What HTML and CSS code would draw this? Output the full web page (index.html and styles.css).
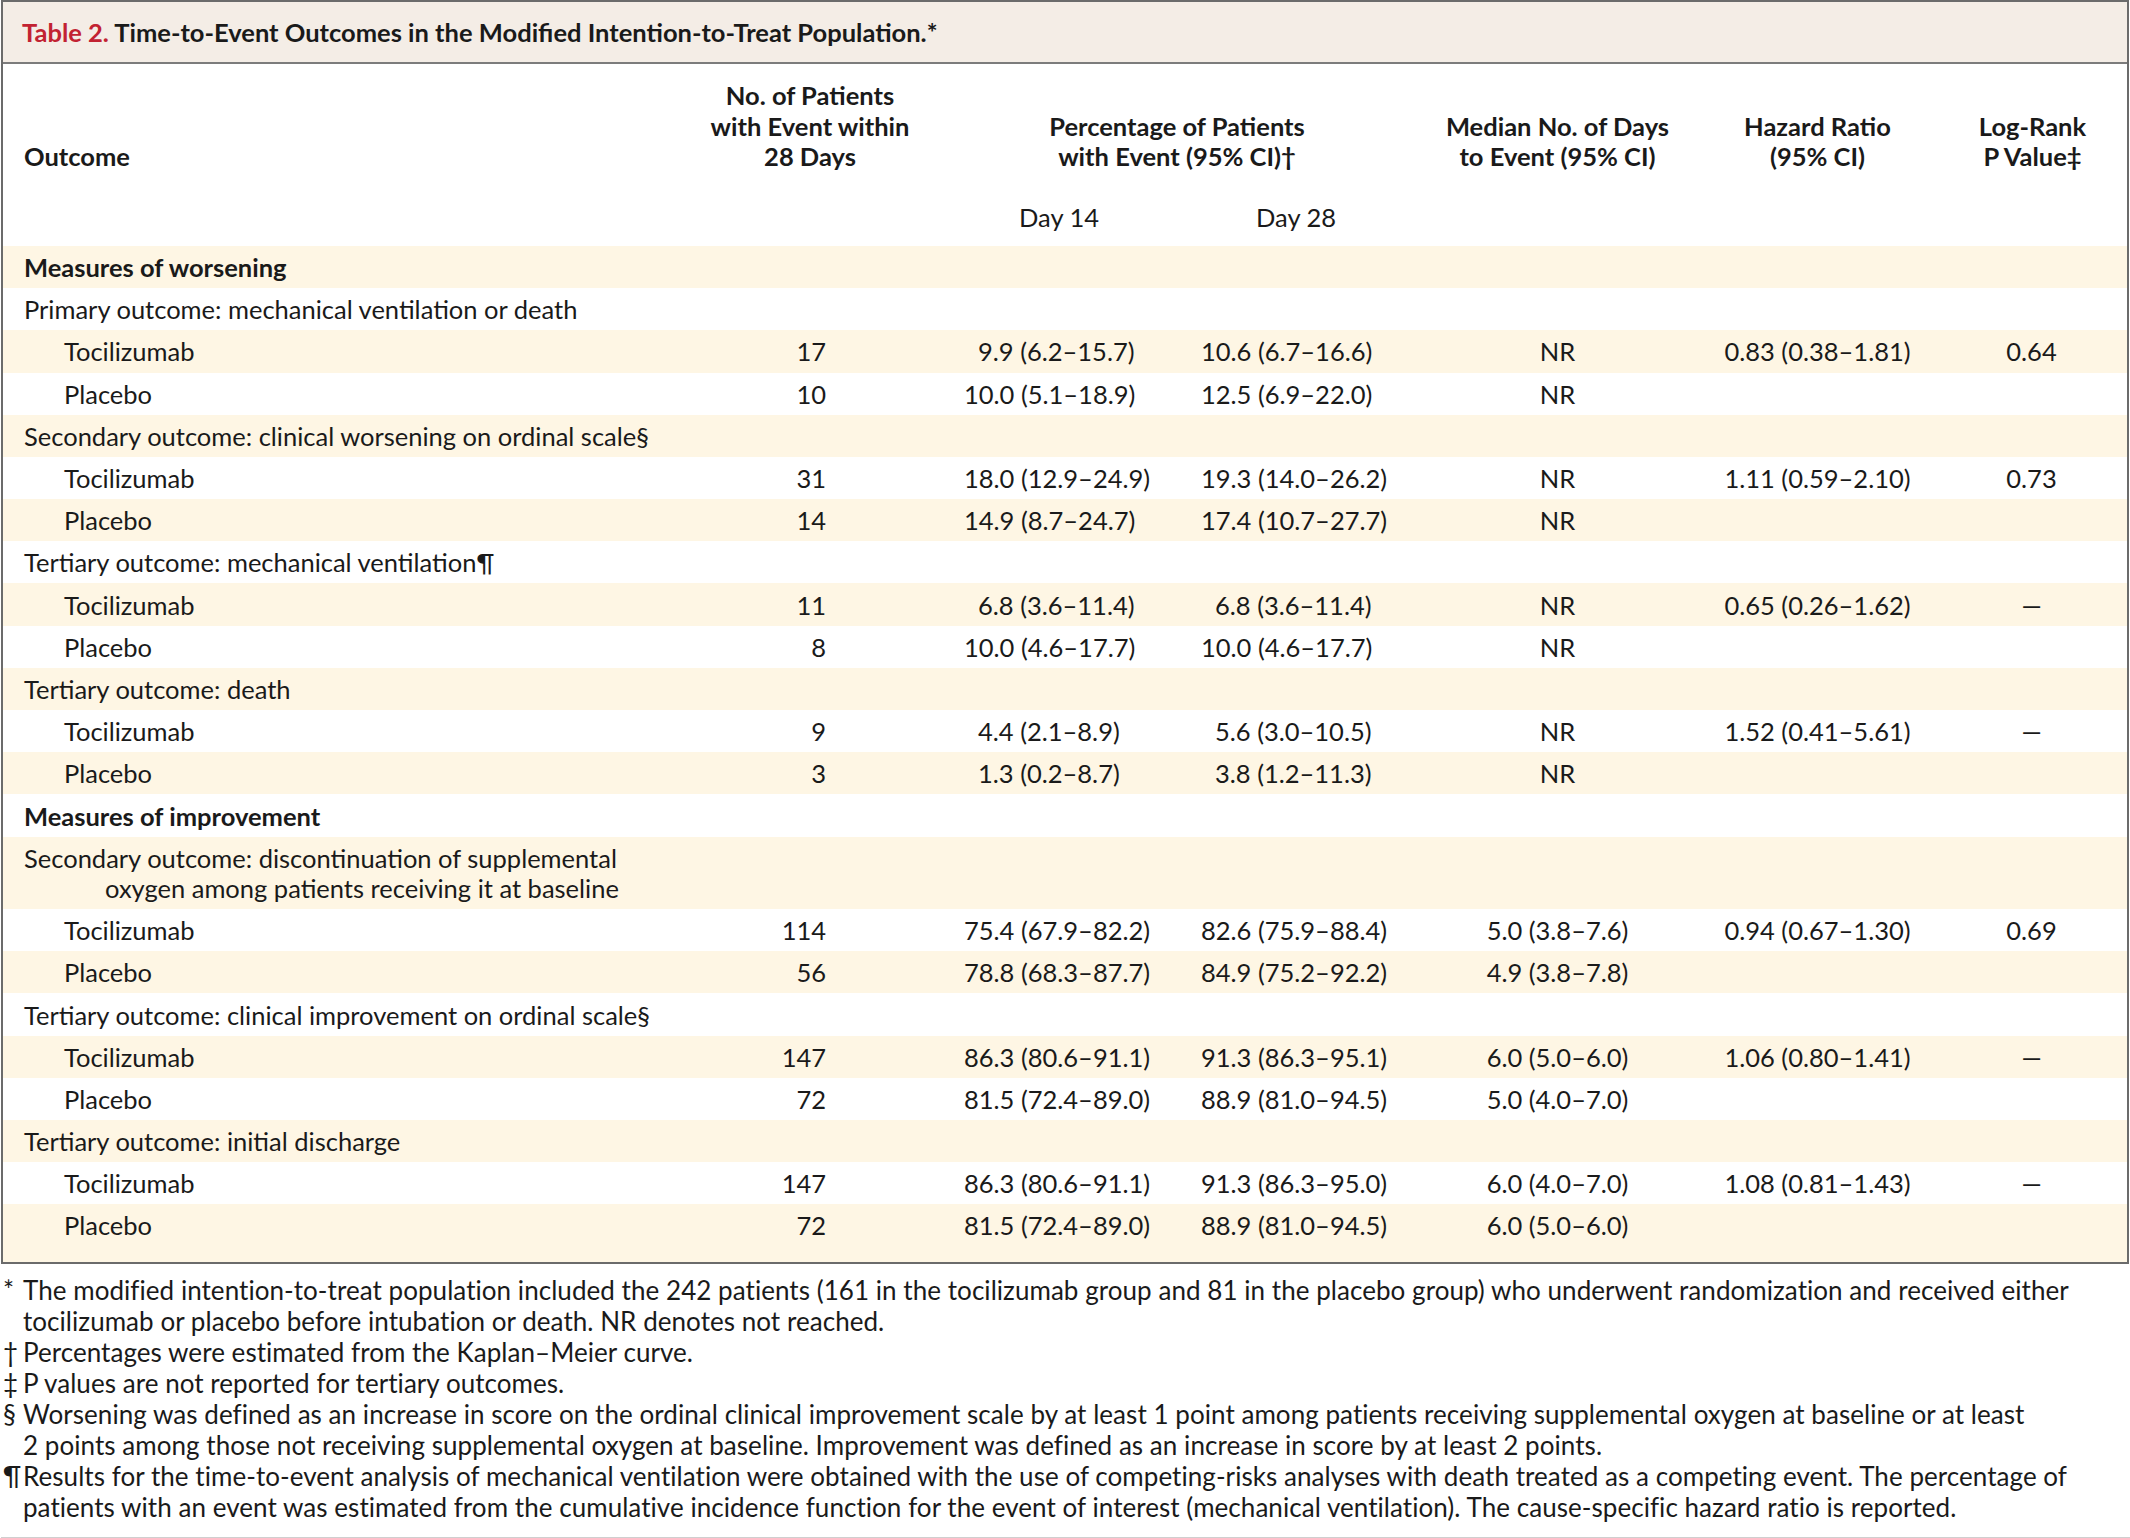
FILE: index.html
```html
<!DOCTYPE html>
<html lang="en">
<head>
<meta charset="utf-8">
<title>Table 2. Time-to-Event Outcomes</title>
<link rel="stylesheet" href="styles.css">
</head>
<body>
<div class="page">
  <div class="tbox">
    <div class="title"><span class="tnum">Table 2.</span> Time-to-Event Outcomes in the Modified Intention-to-Treat Population.*</div>
    <table class="data">
      <colgroup>
        <col class="c-out">
        <col class="c-no">
        <col class="c-d14">
        <col class="c-d28">
        <col class="c-med">
        <col class="c-hr">
        <col class="c-lr">
      </colgroup>
      <thead>
        <tr class="hrow1">
          <th class="h-out">Outcome</th>
          <th class="h-ctr">No. of Patients<br>with Event within<br>28 Days</th>
          <th class="h-ctr h-pct" colspan="2">Percentage of Patients<br>with Event (95% CI)†</th>
          <th class="h-ctr">Median No. of Days<br>to Event (95% CI)</th>
          <th class="h-ctr">Hazard Ratio<br>(95% CI)</th>
          <th class="h-ctr h-lr">Log-Rank<br>P Value‡</th>
        </tr>
        <tr class="hrow2">
          <th></th>
          <th></th>
          <th class="h-day h-d14">Day 14</th>
          <th class="h-day h-d28">Day 28</th>
          <th></th>
          <th></th>
          <th></th>
        </tr>
      </thead>
      <tbody>
        <tr><td class="sec" colspan="7">Measures of worsening</td></tr>
        <tr><td class="lab" colspan="7">Primary outcome: mechanical ventilation or death</td></tr>
        <tr><td class="grp">Tocilizumab</td><td class="n">17</td><td class="d14 p1">9.9 (6.2–15.7)</td><td class="d28">10.6 (6.7–16.6)</td><td class="ctr">NR</td><td class="ctr">0.83 (0.38–1.81)</td><td class="lr">0.64</td></tr>
        <tr><td class="grp">Placebo</td><td class="n">10</td><td class="d14">10.0 (5.1–18.9)</td><td class="d28">12.5 (6.9–22.0)</td><td class="ctr">NR</td><td class="ctr"></td><td class="lr"></td></tr>
        <tr><td class="lab" colspan="7">Secondary outcome: clinical worsening on ordinal scale§</td></tr>
        <tr><td class="grp">Tocilizumab</td><td class="n">31</td><td class="d14">18.0 (12.9–24.9)</td><td class="d28">19.3 (14.0–26.2)</td><td class="ctr">NR</td><td class="ctr">1.11 (0.59–2.10)</td><td class="lr">0.73</td></tr>
        <tr><td class="grp">Placebo</td><td class="n">14</td><td class="d14">14.9 (8.7–24.7)</td><td class="d28">17.4 (10.7–27.7)</td><td class="ctr">NR</td><td class="ctr"></td><td class="lr"></td></tr>
        <tr><td class="lab" colspan="7">Tertiary outcome: mechanical ventilation¶</td></tr>
        <tr><td class="grp">Tocilizumab</td><td class="n">11</td><td class="d14 p1">6.8 (3.6–11.4)</td><td class="d28 p1">6.8 (3.6–11.4)</td><td class="ctr">NR</td><td class="ctr">0.65 (0.26–1.62)</td><td class="lr">—</td></tr>
        <tr><td class="grp">Placebo</td><td class="n">8</td><td class="d14">10.0 (4.6–17.7)</td><td class="d28">10.0 (4.6–17.7)</td><td class="ctr">NR</td><td class="ctr"></td><td class="lr"></td></tr>
        <tr><td class="lab" colspan="7">Tertiary outcome: death</td></tr>
        <tr><td class="grp">Tocilizumab</td><td class="n">9</td><td class="d14 p1">4.4 (2.1–8.9)</td><td class="d28 p1">5.6 (3.0–10.5)</td><td class="ctr">NR</td><td class="ctr">1.52 (0.41–5.61)</td><td class="lr">—</td></tr>
        <tr><td class="grp">Placebo</td><td class="n">3</td><td class="d14 p1">1.3 (0.2–8.7)</td><td class="d28 p1">3.8 (1.2–11.3)</td><td class="ctr">NR</td><td class="ctr"></td><td class="lr"></td></tr>
        <tr><td class="sec" colspan="7">Measures of improvement</td></tr>
        <tr class="tall"><td class="lab hang" colspan="7">Secondary outcome: discontinuation of supplemental<br>oxygen among patients receiving it at baseline</td></tr>
        <tr><td class="grp">Tocilizumab</td><td class="n">114</td><td class="d14">75.4 (67.9–82.2)</td><td class="d28">82.6 (75.9–88.4)</td><td class="ctr">5.0 (3.8–7.6)</td><td class="ctr">0.94 (0.67–1.30)</td><td class="lr">0.69</td></tr>
        <tr><td class="grp">Placebo</td><td class="n">56</td><td class="d14">78.8 (68.3–87.7)</td><td class="d28">84.9 (75.2–92.2)</td><td class="ctr">4.9 (3.8–7.8)</td><td class="ctr"></td><td class="lr"></td></tr>
        <tr><td class="lab" colspan="7">Tertiary outcome: clinical improvement on ordinal scale§</td></tr>
        <tr><td class="grp">Tocilizumab</td><td class="n">147</td><td class="d14">86.3 (80.6–91.1)</td><td class="d28">91.3 (86.3–95.1)</td><td class="ctr">6.0 (5.0–6.0)</td><td class="ctr">1.06 (0.80–1.41)</td><td class="lr">—</td></tr>
        <tr><td class="grp">Placebo</td><td class="n">72</td><td class="d14">81.5 (72.4–89.0)</td><td class="d28">88.9 (81.0–94.5)</td><td class="ctr">5.0 (4.0–7.0)</td><td class="ctr"></td><td class="lr"></td></tr>
        <tr><td class="lab" colspan="7">Tertiary outcome: initial discharge</td></tr>
        <tr><td class="grp">Tocilizumab</td><td class="n">147</td><td class="d14">86.3 (80.6–91.1)</td><td class="d28">91.3 (86.3–95.0)</td><td class="ctr">6.0 (4.0–7.0)</td><td class="ctr">1.08 (0.81–1.43)</td><td class="lr">—</td></tr>
        <tr class="last"><td class="grp">Placebo</td><td class="n">72</td><td class="d14">81.5 (72.4–89.0)</td><td class="d28">88.9 (81.0–94.5)</td><td class="ctr">6.0 (5.0–6.0)</td><td class="ctr"></td><td class="lr"></td></tr>
      </tbody>
    </table>
  </div>
  <div class="notes">
    <div class="note"><span class="sym">*</span><span class="txt">The modified intention-to-treat population included the 242 patients (161 in the tocilizumab group and 81 in the placebo group) who underwent randomization and received either<br>tocilizumab or placebo before intubation or death. NR denotes not reached.</span></div>
    <div class="note"><span class="sym">†</span><span class="txt">Percentages were estimated from the Kaplan–Meier curve.</span></div>
    <div class="note"><span class="sym">‡</span><span class="txt">P values are not reported for tertiary outcomes.</span></div>
    <div class="note"><span class="sym">§</span><span class="txt">Worsening was defined as an increase in score on the ordinal clinical improvement scale by at least 1 point among patients receiving supplemental oxygen at baseline or at least<br>2 points among those not receiving supplemental oxygen at baseline. Improvement was defined as an increase in score by at least 2 points.</span></div>
    <div class="note"><span class="sym">¶</span><span class="txt">Results for the time-to-event analysis of mechanical ventilation were obtained with the use of competing-risks analyses with death treated as a competing event. The percentage of<br>patients with an event was estimated from the cumulative incidence function for the event of interest (mechanical ventilation). The cause-specific hazard ratio is reported.</span></div>
  </div>
</div>
</body>
</html>
```
FILE: styles.css
```css
html, body {
  margin: 0;
  padding: 0;
  background: #ffffff;
}

body {
  font-family: Lato, "Open Sans", "Liberation Sans", sans-serif;
  font-size: 25.5px;
  color: #1a1a1a;
}

.page {
  width: 2130px;
  padding-left: 1px;
  box-sizing: border-box;
}

.tbox {
  width: 2128px;
  box-sizing: border-box;
  border: 2px solid #6b6b6b;
}

.title {
  height: 60px;
  line-height: 60px;
  padding-left: 19px;
  background: #f4ede6;
  border-bottom: 2px solid #7c7c7c;
  font-weight: 700;
  white-space: nowrap;
  color: #1a1a1a;
}

.tnum {
  color: #c22232;
}

.data {
  width: 2124px;
  table-layout: fixed;
  border-collapse: collapse;
  border-spacing: 0;
}

.c-out { width: 697px; }
.c-no { width: 220px; }
.c-d14 { width: 230px; }
.c-d28 { width: 250px; }
.c-med { width: 315px; }
.c-hr { width: 205px; }
.c-lr { width: 207px; }

.data th {
  padding: 0;
  font-weight: 700;
  line-height: 30.6px;
  vertical-align: bottom;
  white-space: nowrap;
}

.data .hrow1 th {
  padding-top: 16px;
}

.data .hrow2 th {
  padding-top: 30.6px;
  padding-bottom: 13px;
}

.data .h-out {
  text-align: left;
  padding-left: 21px;
}

.data .h-ctr {
  text-align: center;
}

.data .h-pct {
  padding-left: 34px;
}

.data .h-lr {
  padding-left: 18px;
}

.data .h-d14 {
  text-align: left;
  font-weight: 400;
  padding-left: 99px;
}

.data .h-d28 {
  text-align: left;
  font-weight: 400;
  padding-left: 106px;
}

.data tbody tr {
  height: 42.2px;
}

.data tbody tr:nth-child(odd) {
  background: #fef6e4;
}

.data td {
  padding: 0;
  line-height: 30px;
  vertical-align: middle;
  white-space: nowrap;
}

.data .sec {
  font-weight: 700;
  padding-left: 21px;
}

.data .lab {
  padding-left: 21px;
}

.data tr.tall {
  height: 72.5px;
}

.data .hang {
  padding-left: 102px;
  text-indent: -81px;
}

.data .grp {
  padding-left: 61px;
}

.data .n {
  text-align: right;
  padding-right: 94px;
}

.data .d14 {
  padding-left: 44px;
}

.data .d28 {
  padding-left: 51px;
}

.data .d14.p1 {
  padding-left: 58px;
}

.data .d28.p1 {
  padding-left: 65px;
}

.data .ctr {
  text-align: center;
}

.data .lr {
  text-align: center;
  padding-left: 16px;
}

.data tr.last {
  height: 58px;
}

.data tr.last td {
  padding-bottom: 16px;
}

.notes {
  margin-top: 11px;
  padding-left: 2px;
  padding-bottom: 14px;
  border-bottom: 2px solid #cfcfcf;
  font-size: 26px;
  letter-spacing: 0.05px;
  line-height: 30.9px;
}

.note {
  display: grid;
  grid-template-columns: 20px 1fr;
}

.sym {
  display: block;
}

.txt {
  display: block;
  white-space: nowrap;
}
```
